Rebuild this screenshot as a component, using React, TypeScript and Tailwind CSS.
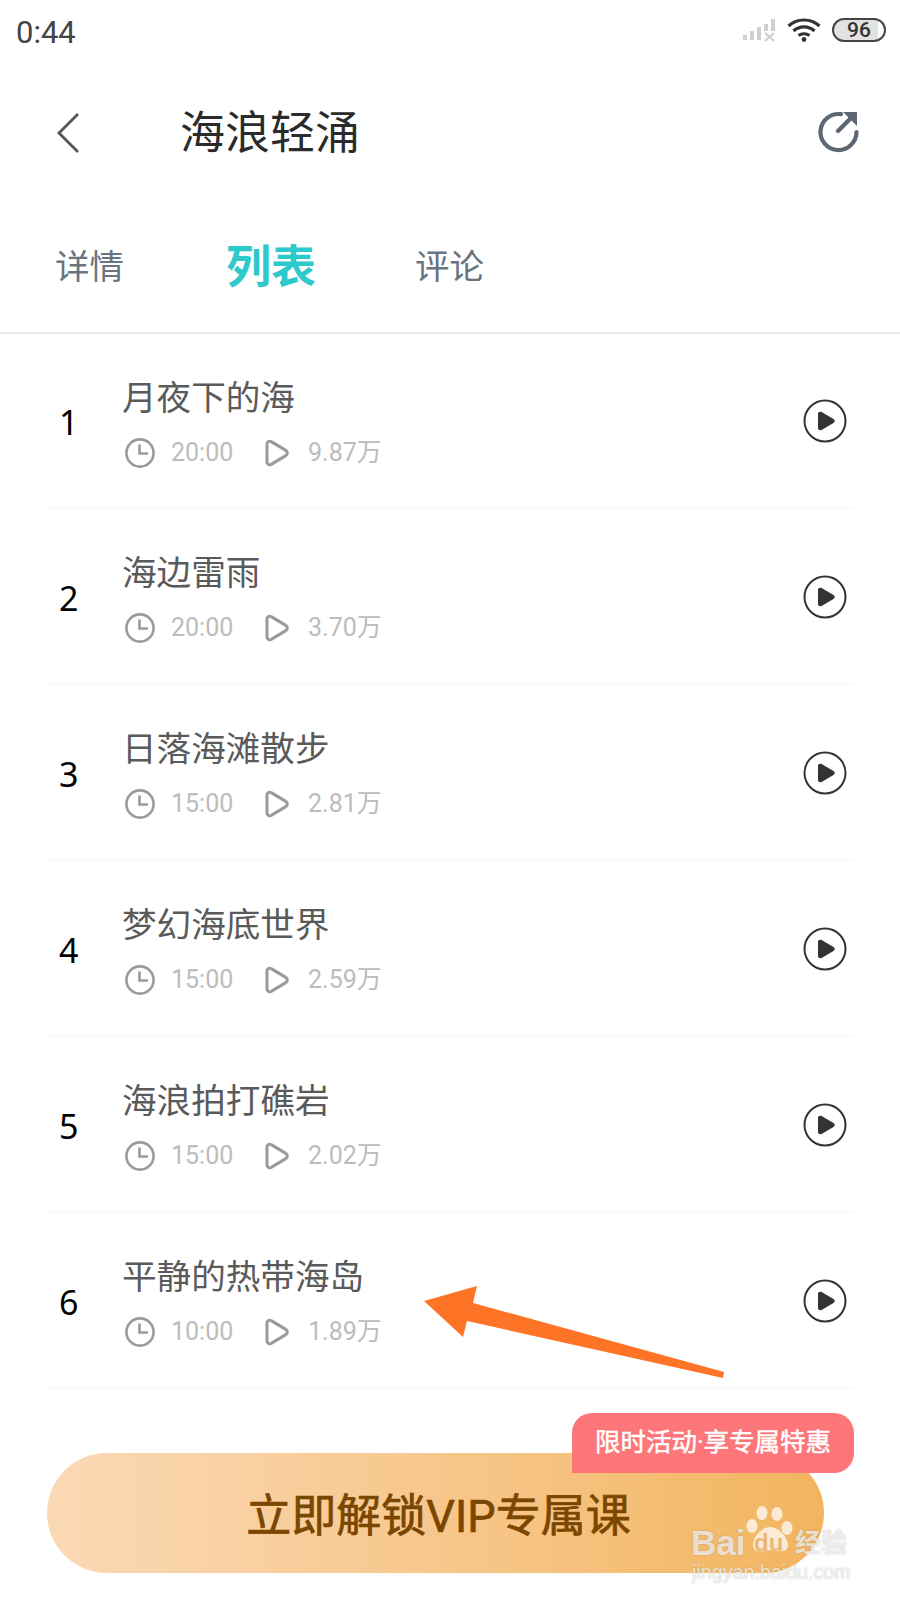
import React from 'react'

const cjk = "font-['Roboto','Noto_Sans_CJK_SC',sans-serif]"

const tracks = [
  { no: 1, title: '月夜下的海', time: '20:00', plays: '9.87万' },
  { no: 2, title: '海边雷雨', time: '20:00', plays: '3.70万' },
  { no: 3, title: '日落海滩散步', time: '15:00', plays: '2.81万' },
  { no: 4, title: '梦幻海底世界', time: '15:00', plays: '2.59万' },
  { no: 5, title: '海浪拍打礁岩', time: '15:00', plays: '2.02万' },
  { no: 6, title: '平静的热带海岛', time: '10:00', plays: '1.89万' },
]

const StatusIcons = () => (
  <div className="mt-[-4px] flex items-center">
    {/* signal */}
    <svg width="34" height="24" viewBox="0 0 34 24" className="mr-[11px]">
      <rect x="1" y="17" width="4" height="5" fill="#cfcfcf" />
      <rect x="8" y="13" width="4" height="9" fill="#cfcfcf" />
      <rect x="15" y="9" width="4" height="13" fill="#cfcfcf" />
      <rect x="22" y="6" width="4" height="7" fill="#cfcfcf" />
      <rect x="29" y="1" width="4" height="12" fill="#cfcfcf" />
      <path d="M23 15l9 8M32 15l-9 8" stroke="#cfcfcf" strokeWidth="2.2" />
    </svg>
    {/* wifi */}
    <svg width="34" height="24" viewBox="0 0 34 24" className="mr-[11px]">
      <path d="M1.5 8C10 0 24 0 32.5 8" fill="none" stroke="#333" strokeWidth="3.2" />
      <path d="M6.5 13C12.5 7.5 21.5 7.5 27.5 13" fill="none" stroke="#333" strokeWidth="3.2" />
      <path d="M11.5 17.5C14.5 15 19.5 15 22.5 17.5" fill="none" stroke="#333" strokeWidth="3" />
      <circle cx="17" cy="21.5" r="2.4" fill="#333" />
    </svg>
    {/* battery */}
    <div className="flex h-[24px] w-[54px] items-center justify-center rounded-full border-[2.5px] border-[#444] bg-[linear-gradient(90deg,#e2e2e2_0%,#e2e2e2_88%,#ffffff_88%)]">
      <span className="font-['Roboto',sans-serif] text-[21px] leading-none font-medium text-[#333]">96</span>
    </div>
  </div>
)

const TrackRow = ({ no, title, time, plays }: { no: number; title: string; time: string; plays: string }) => (
  <div className="flex h-[176px] items-center border-b border-[#f4f4f4] first:h-[175px]">
    <div className="mt-[2px] w-[75px] pl-[11px] font-['Noto_Sans',sans-serif] text-[34px] leading-none text-black">{no}</div>
    <div className="mt-[4px] flex-1">
      <div className={`${cjk} ml-[-1px] text-[34.6px] leading-[40px] text-[#5a5a5a]`}>{title}</div>
      <div className="mt-[19px] flex items-center">
        <svg width="32" height="32" viewBox="0 0 32 32" className="ml-[1px]">
          <circle cx="16" cy="16" r="13.6" fill="none" stroke="#9a9a9a" strokeWidth="2.6" />
          <path d="M15.5 7.5V16.5H24" fill="none" stroke="#9a9a9a" strokeWidth="2.6" />
        </svg>
        <span className={`${cjk} ml-[15px] w-[93px] text-[25px] leading-8 text-[#bcbcbc]`}>{time}</span>
        <svg width="26" height="28" viewBox="0 0 26 28">
          <path d="M3 5C3 2.6 5.2 1.5 7.2 2.6L21.8 11.4C23.8 12.6 23.8 15.4 21.8 16.6L7.2 25.4C5.2 26.5 3 25.4 3 23Z" fill="none" stroke="#9a9a9a" strokeWidth="3" strokeLinejoin="round" />
        </svg>
        <span className={`${cjk} ml-[18px] text-[25px] leading-8 text-[#bcbcbc]`}>{plays}</span>
      </div>
    </div>
    <svg width="44" height="44" viewBox="0 0 44 44" className="mr-[6px]">
      <circle cx="22" cy="22" r="20.5" fill="none" stroke="#333" strokeWidth="2" />
      <path d="M15 15C15 13 17 12.2 18.6 13.1L30.5 20C32.2 21 32.2 23 30.5 24L18.6 30.9C17 31.8 15 31 15 29Z" fill="#333" />
    </svg>
  </div>
)

const Watermark = () => (
  <div className="absolute top-[1505px] left-[690px] h-[78px] w-[165px] text-white/70 [text-shadow:0_0_1.5px_rgba(110,110,110,0.45)]">
    <svg width="60" height="48" viewBox="0 0 60 48" className="absolute top-0 left-[50px]">
      <g fill="#ffffff" fillOpacity="0.72">
        <ellipse cx="22" cy="8" rx="5.5" ry="7" />
        <ellipse cx="37" cy="9" rx="5.5" ry="7" />
        <ellipse cx="12" cy="21" rx="5.5" ry="7" />
        <ellipse cx="47" cy="23" rx="5.5" ry="7" />
        <path d="M13 40C13 32 22 22 30 22C38 22 48 32 48 40C48 46 42 47 38 46C33 45 27 45 23 46C18 47 13 46 13 40Z" />
      </g>
    </svg>
    <span className="absolute top-[20px] left-[1px] font-['Liberation_Sans',sans-serif] text-[35px] leading-9 font-bold">Bai</span>
    <span className="absolute top-[26px] left-[64px] font-['Liberation_Sans',sans-serif] text-[24px] leading-6 font-bold text-[#e9b878] [text-shadow:none]">du</span>
    <span className="absolute top-[20px] left-[105px] font-['Noto_Sans_CJK_SC',sans-serif] text-[26px] leading-8 font-bold">经验</span>
    <span className="absolute top-[55px] left-[2px] font-['Liberation_Sans',sans-serif] text-[19.7px] leading-6">jingyan.baidu.com</span>
  </div>
)

export default function App() {
  return (
    <div className={`relative h-[1600px] w-[900px] overflow-hidden bg-white ${cjk}`}>
      {/* status bar */}
      <div className="flex h-[64px] items-center justify-between pr-[14px] pl-[16px]">
        <span className="font-['Roboto',sans-serif] text-[31px] leading-none text-[#444]">0:44</span>
        <StatusIcons />
      </div>

      {/* title */}
      <div className="flex h-[138px] items-center pr-[40px] pl-[56px]">
        <svg width="24" height="42" viewBox="0 0 24 42">
          <path d="M22 2L3 21L22 40" fill="none" stroke="#555" strokeWidth="2.8" />
        </svg>
        <h1 className="ml-[100px] flex-1 text-[45px] leading-none font-normal text-[#2b2b2b]">海浪轻涌</h1>
        <svg width="44" height="44" viewBox="0 0 44 44">
          <path d="M25 3.2A18 18 0 1 0 40.5 21" fill="none" stroke="#5d6772" strokeWidth="4.2" strokeLinecap="round" />
          <path d="M22 20L35 7" fill="none" stroke="#5d6772" strokeWidth="4.2" strokeLinecap="round" />
          <path d="M27 1H41V15Z" fill="#5d6772" />
        </svg>
      </div>

      {/* tabs */}
      <div className="flex h-[132px] items-center border-b-2 border-[#e9e9e9] pl-[55px]">
        <span className="w-[171px] text-[34.5px] leading-none text-[#68747f]">详情</span>
        <span className="w-[189px] text-[45px] leading-none font-bold text-[#2ec9cb]">列表</span>
        <span className="text-[34.5px] leading-none text-[#68747f]">评论</span>
      </div>

      {/* list */}
      <div className="ml-[48px] w-[805px]">
        {tracks.map((t) => (
          <TrackRow key={t.no} {...t} />
        ))}
      </div>

      {/* unlock button */}
      <div className="relative mt-[64px] ml-[47px] flex h-[120px] w-[777px] items-center justify-center rounded-[60px] bg-gradient-to-r from-[#fbd9b5] to-[#f2b55e]">
        <span className="mt-[6px] ml-[6px] text-[45px] leading-none font-normal text-[#7a4600] [-webkit-text-stroke:0.7px_#7a4600]">立即解锁VIP专属课</span>
        <div className="absolute top-[-40px] left-[525px] flex h-[60px] w-[282px] items-center justify-center rounded-t-[20px] rounded-br-[20px] bg-[#fd7679]">
          <span className="text-[25.5px] leading-none font-normal text-white [-webkit-text-stroke:0.5px_white]">限时活动·享专属特惠</span>
        </div>
      </div>

      {/* annotation arrow */}
      <svg width="900" height="1600" viewBox="0 0 900 1600" className="pointer-events-none absolute top-0 left-0">
        <polygon points="424,1301 477,1286 473,1303 724,1372 723,1378 467,1321 463,1337" fill="#fe7427" />
      </svg>

      <Watermark />
    </div>
  )
}
